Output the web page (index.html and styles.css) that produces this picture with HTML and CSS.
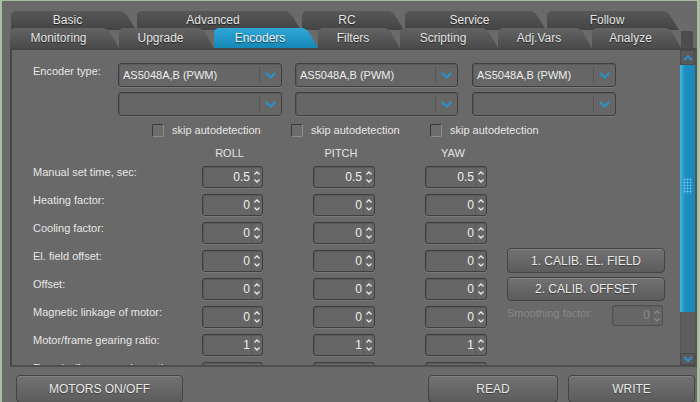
FILE: index.html
```html
<!DOCTYPE html>
<html>
<head>
<meta charset="utf-8">
<link rel="stylesheet" href="styles.css">
</head>
<body>
<div class="win">
  <div class="tabs">
    <div class="tabrow r1">
      <div class="tab w-basic">Basic</div>
      <div class="tab w-adv">Advanced</div>
      <div class="tab w-rc">RC</div>
      <div class="tab w-serv">Service</div>
      <div class="tab w-follow">Follow</div>
    </div>
    <div class="tabrow r2">
      <div class="tab w-mon">Monitoring</div>
      <div class="tab w-upg">Upgrade</div>
      <div class="tab w-enc active">Encoders</div>
      <div class="tab w-fil">Filters</div>
      <div class="tab w-scr">Scripting</div>
      <div class="tab w-adj">Adj.Vars</div>
      <div class="tab w-ana">Analyze</div>
      <div class="tabfill"></div>
    </div>
  </div>

  <div class="panel">
    <div class="content">
      <div class="enc">
        <div class="enc-label">Encoder type:</div>
        <div class="combos">
          <div class="combo c1"><span class="ctext">AS5048A,B (PWM)</span><span class="cbtn"><svg width="11" height="7" viewBox="0 0 11 7"><path d="M1 1 L5.5 5.5 L10 1" fill="none" stroke="#2a93c6" stroke-width="2.2"/></svg></span></div>
          <div class="combo c2"><span class="ctext">AS5048A,B (PWM)</span><span class="cbtn"><svg width="11" height="7" viewBox="0 0 11 7"><path d="M1 1 L5.5 5.5 L10 1" fill="none" stroke="#2a93c6" stroke-width="2.2"/></svg></span></div>
          <div class="combo c3"><span class="ctext">AS5048A,B (PWM)</span><span class="cbtn"><svg width="11" height="7" viewBox="0 0 11 7"><path d="M1 1 L5.5 5.5 L10 1" fill="none" stroke="#2a93c6" stroke-width="2.2"/></svg></span></div>
          <div class="combo c1"><span class="ctext"></span><span class="cbtn"><svg width="11" height="7" viewBox="0 0 11 7"><path d="M1 1 L5.5 5.5 L10 1" fill="none" stroke="#2a93c6" stroke-width="2.2"/></svg></span></div>
          <div class="combo c2"><span class="ctext"></span><span class="cbtn"><svg width="11" height="7" viewBox="0 0 11 7"><path d="M1 1 L5.5 5.5 L10 1" fill="none" stroke="#2a93c6" stroke-width="2.2"/></svg></span></div>
          <div class="combo c3"><span class="ctext"></span><span class="cbtn"><svg width="11" height="7" viewBox="0 0 11 7"><path d="M1 1 L5.5 5.5 L10 1" fill="none" stroke="#2a93c6" stroke-width="2.2"/></svg></span></div>
        </div>
      </div>

      <div class="checks">
        <label class="chk"><span class="box"></span>skip autodetection</label>
        <label class="chk"><span class="box"></span>skip autodetection</label>
        <label class="chk"><span class="box"></span>skip autodetection</label>
      </div>

      <div class="params">
        <div class="grid">
          <div></div><div class="hdr">ROLL</div><div class="hdr">PITCH</div><div class="hdr">YAW</div>

          <div class="lbl">Manual set time, sec:</div>
          <div class="spin"><span class="val">0.5</span><span class="arr"><svg width="6" height="4" viewBox="0 0 6 4"><path d="M0.5 3.5 L3 1 L5.5 3.5" fill="none" stroke="#e8e8e8" stroke-width="1.3"/></svg><svg width="6" height="4" viewBox="0 0 6 4"><path d="M0.5 0.5 L3 3 L5.5 0.5" fill="none" stroke="#e8e8e8" stroke-width="1.3"/></svg></span></div>
          <div class="spin"><span class="val">0.5</span><span class="arr"><svg width="6" height="4" viewBox="0 0 6 4"><path d="M0.5 3.5 L3 1 L5.5 3.5" fill="none" stroke="#e8e8e8" stroke-width="1.3"/></svg><svg width="6" height="4" viewBox="0 0 6 4"><path d="M0.5 0.5 L3 3 L5.5 0.5" fill="none" stroke="#e8e8e8" stroke-width="1.3"/></svg></span></div>
          <div class="spin"><span class="val">0.5</span><span class="arr"><svg width="6" height="4" viewBox="0 0 6 4"><path d="M0.5 3.5 L3 1 L5.5 3.5" fill="none" stroke="#e8e8e8" stroke-width="1.3"/></svg><svg width="6" height="4" viewBox="0 0 6 4"><path d="M0.5 0.5 L3 3 L5.5 0.5" fill="none" stroke="#e8e8e8" stroke-width="1.3"/></svg></span></div>

          <div class="lbl">Heating factor:</div>
          <div class="spin"><span class="val">0</span><span class="arr"><svg width="6" height="4" viewBox="0 0 6 4"><path d="M0.5 3.5 L3 1 L5.5 3.5" fill="none" stroke="#e8e8e8" stroke-width="1.3"/></svg><svg width="6" height="4" viewBox="0 0 6 4"><path d="M0.5 0.5 L3 3 L5.5 0.5" fill="none" stroke="#e8e8e8" stroke-width="1.3"/></svg></span></div>
          <div class="spin"><span class="val">0</span><span class="arr"><svg width="6" height="4" viewBox="0 0 6 4"><path d="M0.5 3.5 L3 1 L5.5 3.5" fill="none" stroke="#e8e8e8" stroke-width="1.3"/></svg><svg width="6" height="4" viewBox="0 0 6 4"><path d="M0.5 0.5 L3 3 L5.5 0.5" fill="none" stroke="#e8e8e8" stroke-width="1.3"/></svg></span></div>
          <div class="spin"><span class="val">0</span><span class="arr"><svg width="6" height="4" viewBox="0 0 6 4"><path d="M0.5 3.5 L3 1 L5.5 3.5" fill="none" stroke="#e8e8e8" stroke-width="1.3"/></svg><svg width="6" height="4" viewBox="0 0 6 4"><path d="M0.5 0.5 L3 3 L5.5 0.5" fill="none" stroke="#e8e8e8" stroke-width="1.3"/></svg></span></div>

          <div class="lbl">Cooling factor:</div>
          <div class="spin"><span class="val">0</span><span class="arr"><svg width="6" height="4" viewBox="0 0 6 4"><path d="M0.5 3.5 L3 1 L5.5 3.5" fill="none" stroke="#e8e8e8" stroke-width="1.3"/></svg><svg width="6" height="4" viewBox="0 0 6 4"><path d="M0.5 0.5 L3 3 L5.5 0.5" fill="none" stroke="#e8e8e8" stroke-width="1.3"/></svg></span></div>
          <div class="spin"><span class="val">0</span><span class="arr"><svg width="6" height="4" viewBox="0 0 6 4"><path d="M0.5 3.5 L3 1 L5.5 3.5" fill="none" stroke="#e8e8e8" stroke-width="1.3"/></svg><svg width="6" height="4" viewBox="0 0 6 4"><path d="M0.5 0.5 L3 3 L5.5 0.5" fill="none" stroke="#e8e8e8" stroke-width="1.3"/></svg></span></div>
          <div class="spin"><span class="val">0</span><span class="arr"><svg width="6" height="4" viewBox="0 0 6 4"><path d="M0.5 3.5 L3 1 L5.5 3.5" fill="none" stroke="#e8e8e8" stroke-width="1.3"/></svg><svg width="6" height="4" viewBox="0 0 6 4"><path d="M0.5 0.5 L3 3 L5.5 0.5" fill="none" stroke="#e8e8e8" stroke-width="1.3"/></svg></span></div>

          <div class="lbl">El. field offset:</div>
          <div class="spin"><span class="val">0</span><span class="arr"><svg width="6" height="4" viewBox="0 0 6 4"><path d="M0.5 3.5 L3 1 L5.5 3.5" fill="none" stroke="#e8e8e8" stroke-width="1.3"/></svg><svg width="6" height="4" viewBox="0 0 6 4"><path d="M0.5 0.5 L3 3 L5.5 0.5" fill="none" stroke="#e8e8e8" stroke-width="1.3"/></svg></span></div>
          <div class="spin"><span class="val">0</span><span class="arr"><svg width="6" height="4" viewBox="0 0 6 4"><path d="M0.5 3.5 L3 1 L5.5 3.5" fill="none" stroke="#e8e8e8" stroke-width="1.3"/></svg><svg width="6" height="4" viewBox="0 0 6 4"><path d="M0.5 0.5 L3 3 L5.5 0.5" fill="none" stroke="#e8e8e8" stroke-width="1.3"/></svg></span></div>
          <div class="spin"><span class="val">0</span><span class="arr"><svg width="6" height="4" viewBox="0 0 6 4"><path d="M0.5 3.5 L3 1 L5.5 3.5" fill="none" stroke="#e8e8e8" stroke-width="1.3"/></svg><svg width="6" height="4" viewBox="0 0 6 4"><path d="M0.5 0.5 L3 3 L5.5 0.5" fill="none" stroke="#e8e8e8" stroke-width="1.3"/></svg></span></div>

          <div class="lbl">Offset:</div>
          <div class="spin"><span class="val">0</span><span class="arr"><svg width="6" height="4" viewBox="0 0 6 4"><path d="M0.5 3.5 L3 1 L5.5 3.5" fill="none" stroke="#e8e8e8" stroke-width="1.3"/></svg><svg width="6" height="4" viewBox="0 0 6 4"><path d="M0.5 0.5 L3 3 L5.5 0.5" fill="none" stroke="#e8e8e8" stroke-width="1.3"/></svg></span></div>
          <div class="spin"><span class="val">0</span><span class="arr"><svg width="6" height="4" viewBox="0 0 6 4"><path d="M0.5 3.5 L3 1 L5.5 3.5" fill="none" stroke="#e8e8e8" stroke-width="1.3"/></svg><svg width="6" height="4" viewBox="0 0 6 4"><path d="M0.5 0.5 L3 3 L5.5 0.5" fill="none" stroke="#e8e8e8" stroke-width="1.3"/></svg></span></div>
          <div class="spin"><span class="val">0</span><span class="arr"><svg width="6" height="4" viewBox="0 0 6 4"><path d="M0.5 3.5 L3 1 L5.5 3.5" fill="none" stroke="#e8e8e8" stroke-width="1.3"/></svg><svg width="6" height="4" viewBox="0 0 6 4"><path d="M0.5 0.5 L3 3 L5.5 0.5" fill="none" stroke="#e8e8e8" stroke-width="1.3"/></svg></span></div>

          <div class="lbl">Magnetic linkage of motor:</div>
          <div class="spin"><span class="val">0</span><span class="arr"><svg width="6" height="4" viewBox="0 0 6 4"><path d="M0.5 3.5 L3 1 L5.5 3.5" fill="none" stroke="#e8e8e8" stroke-width="1.3"/></svg><svg width="6" height="4" viewBox="0 0 6 4"><path d="M0.5 0.5 L3 3 L5.5 0.5" fill="none" stroke="#e8e8e8" stroke-width="1.3"/></svg></span></div>
          <div class="spin"><span class="val">0</span><span class="arr"><svg width="6" height="4" viewBox="0 0 6 4"><path d="M0.5 3.5 L3 1 L5.5 3.5" fill="none" stroke="#e8e8e8" stroke-width="1.3"/></svg><svg width="6" height="4" viewBox="0 0 6 4"><path d="M0.5 0.5 L3 3 L5.5 0.5" fill="none" stroke="#e8e8e8" stroke-width="1.3"/></svg></span></div>
          <div class="spin"><span class="val">0</span><span class="arr"><svg width="6" height="4" viewBox="0 0 6 4"><path d="M0.5 3.5 L3 1 L5.5 3.5" fill="none" stroke="#e8e8e8" stroke-width="1.3"/></svg><svg width="6" height="4" viewBox="0 0 6 4"><path d="M0.5 0.5 L3 3 L5.5 0.5" fill="none" stroke="#e8e8e8" stroke-width="1.3"/></svg></span></div>

          <div class="lbl">Motor/frame gearing ratio:</div>
          <div class="spin"><span class="val">1</span><span class="arr"><svg width="6" height="4" viewBox="0 0 6 4"><path d="M0.5 3.5 L3 1 L5.5 3.5" fill="none" stroke="#e8e8e8" stroke-width="1.3"/></svg><svg width="6" height="4" viewBox="0 0 6 4"><path d="M0.5 0.5 L3 3 L5.5 0.5" fill="none" stroke="#e8e8e8" stroke-width="1.3"/></svg></span></div>
          <div class="spin"><span class="val">1</span><span class="arr"><svg width="6" height="4" viewBox="0 0 6 4"><path d="M0.5 3.5 L3 1 L5.5 3.5" fill="none" stroke="#e8e8e8" stroke-width="1.3"/></svg><svg width="6" height="4" viewBox="0 0 6 4"><path d="M0.5 0.5 L3 3 L5.5 0.5" fill="none" stroke="#e8e8e8" stroke-width="1.3"/></svg></span></div>
          <div class="spin"><span class="val">1</span><span class="arr"><svg width="6" height="4" viewBox="0 0 6 4"><path d="M0.5 3.5 L3 1 L5.5 3.5" fill="none" stroke="#e8e8e8" stroke-width="1.3"/></svg><svg width="6" height="4" viewBox="0 0 6 4"><path d="M0.5 0.5 L3 3 L5.5 0.5" fill="none" stroke="#e8e8e8" stroke-width="1.3"/></svg></span></div>

          <div class="lbl">Encoder/frame gearing ratio:</div>
          <div class="spin"><span class="val"></span><span class="arr"></span></div>
          <div class="spin"><span class="val"></span><span class="arr"></span></div>
          <div class="spin"><span class="val"></span><span class="arr"></span></div>
        </div>

        <div class="side">
          <div class="btn calib">1. CALIB. EL. FIELD</div>
          <div class="btn calib">2. CALIB. OFFSET</div>
          <div class="smooth">
            <span class="slbl">Smoothing factor:</span>
            <div class="spin dis"><span class="val">0</span><span class="arr"><svg width="6" height="4" viewBox="0 0 6 4"><path d="M0.5 3.5 L3 1 L5.5 3.5" fill="none" stroke="#8a8a8a" stroke-width="1.2"/></svg><svg width="6" height="4" viewBox="0 0 6 4"><path d="M0.5 0.5 L3 3 L5.5 0.5" fill="none" stroke="#8a8a8a" stroke-width="1.2"/></svg></span></div>
          </div>
        </div>
      </div>
    </div>

    <div class="scrollbar">
      <div class="sbtn"><svg width="10" height="6" viewBox="0 0 10 6"><path d="M1 5 L5 1.2 L9 5" fill="none" stroke="#2a93c6" stroke-width="2"/></svg></div>
      <div class="thumb"><div class="grip"></div></div>
      <div class="track"></div>
      <div class="sbtn down"><svg width="10" height="6" viewBox="0 0 10 6"><path d="M1 1 L5 4.8 L9 1" fill="none" stroke="#2a93c6" stroke-width="2"/></svg></div>
    </div>
  </div>

  <div class="bottom">
    <div class="btn bb motors">MOTORS ON/OFF</div>
    <div class="btn bb read">READ</div>
    <div class="btn bb write">WRITE</div>
  </div>
</div>
</body>
</html>
```

FILE: styles.css
```css
* { box-sizing: border-box; }
html, body { margin: 0; padding: 0; }
body {
  width: 700px;
  height: 402px;
  overflow: hidden;
  background: #6a6a6a;
  font-family: "Liberation Sans", Arial, sans-serif;
  color: #e6e6e6;
}
.win {
  width: 700px;
  height: 402px;
  border-top: 1px solid #a8c0a0;
  border-left: 2px solid #a8c0a0;
  border-right: 3px solid #a8c0a0;
  background: #6a6a6a;
  overflow: hidden;
}

/* tabs */
.tabs { padding-top: 10px; }
.tabrow { display: flex; }
.r1 { margin-left: 9px; gap: 1px; height: 19px; }
.r2 { margin-left: 8px; height: 20px; margin-top: -2px; position: relative; }
.tab {
  font-size: 12px;
  line-height: 19px;
  text-align: center;
  padding-right: 12px;
  color: #e4e4e4;
  text-shadow: 0 1px 1px rgba(0,0,0,0.55);
  clip-path: polygon(0 3px, 2px 1px, 4px 0, calc(100% - 15px) 0, calc(100% - 11px) 2px, calc(100% - 8px) 6px, 100% 100%, 0 100%);
}
.r1 .tab { background: linear-gradient(#575757, #444444); }
.r2 .tab { background: linear-gradient(#636363, #4b4b4b); line-height: 20px; }
.r2 .tab.active { background: linear-gradient(#2ea6d6, #1788b8); color: #f2f2f2; }
.tabfill { width: 12px; margin-top: 3px; background: #4d4d4d; border-radius: 0 3px 0 0; }
.w-basic { width: 125px; }
.w-adv { width: 164px; }
.w-rc { width: 102px; }
.w-serv { width: 141px; }
.w-follow { width: 132px; }
.w-mon { width: 109px; }
.w-upg { width: 95px; }
.w-enc { width: 104px; }
.w-fil { width: 82px; }
.w-scr { width: 98px; }
.w-adj { width: 94px; }
.w-ana { width: 89px; }

/* panel */
.panel {
  margin-left: 8px;
  width: 687px;
  height: 319px;
  display: flex;
  border: 2px solid #474747;
  border-right-color: #555;
  border-bottom-color: #4e4e4e;
  background: #696969;
}
.content {
  flex: 1;
  overflow: hidden;
  padding-left: 21px;
  padding-top: 13px;
  font-size: 11px;
}

.enc { display: flex; }
.enc-label { width: 85px; padding-top: 2px; }
.combos {
  display: grid;
  grid-template-columns: 164px 163px 145px;
  column-gap: 13px;
  row-gap: 5px;
}
.combos .c3 { margin-left: 1px; }
.combo {
  height: 24px;
  display: flex;
  align-items: center;
  border: 1px solid #3f3f3f;
  border-radius: 3px;
  background: #666;
  box-shadow: inset 1px 1px 0 #5a5a5a, 0 1px 0 #7a7a7a;
}
.ctext { flex: 1; padding-left: 4px; color: #ececec; }
.cbtn {
  width: 22px;
  height: 16px;
  border-left: 1px solid #555;
  display: flex;
  align-items: center;
  justify-content: center;
}

.checks { display: flex; margin-left: 119px; margin-top: 7px; height: 14px; }
.chk { width: 139px; display: flex; align-items: center; gap: 8px; color: #e6e6e6; }
.box {
  width: 12px; height: 13px;
  border: 1px solid;
  border-color: #3a3a3a #8e8e8e #8e8e8e #3a3a3a;
  border-radius: 2px;
  background: #6c6c6c;
}

.params { display: flex; margin-top: 10px; }
.grid {
  display: grid;
  grid-template-columns: 119px 61px 62px 62px;
  grid-template-rows: 13px;
  grid-auto-rows: 22px;
  column-gap: 50px;
  row-gap: 6px;
}
.hdr { text-align: center; line-height: 13px; color: #e2e2e2; padding-right: 6px; }
.lbl { line-height: 13px; white-space: nowrap; }
.spin {
  display: flex;
  border: 1px solid #3f3f3f;
  border-radius: 3px;
  background: #666;
  box-shadow: inset 1px 1px 0 #595959, 0 1px 0 #7a7a7a;
  font-size: 12px;
}
.val { flex: 1; text-align: right; line-height: 20px; padding-right: 1px; color: #ededed; }
.arr {
  width: 11px;
  display: flex;
  flex-direction: column;
  align-items: center;
  justify-content: center;
  gap: 4px;
  border-left: 1px solid #5a5a5a;
}

.side { margin-left: 20px; margin-top: 101px; width: 158px; }
.btn {
  display: flex;
  align-items: center;
  justify-content: center;
  font-size: 12px;
  color: #e8e8e8;
  border: 1px solid #444;
  border-radius: 4px;
  background: linear-gradient(#727272, #5c5c5c);
  box-shadow: inset 0 1px 0 rgba(255,255,255,0.12);
  text-shadow: 0 1px 1px rgba(0,0,0,0.4);
}
.calib { height: 25px; margin-bottom: 4px; }
.calib + .calib { height: 24px; }
.smooth { display: flex; justify-content: space-between; align-items: flex-start; margin-top: 1px; width: 156px; }
.slbl { color: #878787; padding-top: 2px; }
.spin.dis {
  width: 51px;
  height: 21px;
  border-color: #505050;
  box-shadow: inset 1px 1px 0 #5e5e5e;
}
.spin.dis .val { color: #8a8a8a; line-height: 19px; }

/* scrollbar */
.scrollbar { width: 15px; margin-right: 0; display: flex; flex-direction: column; }
.sbtn {
  height: 15px;
  background: #5a5a5a;
  border: 1px solid #4a4a4a;
  display: flex;
  align-items: center;
  justify-content: center;
}
.sbtn.down { height: 12px; }
.thumb {
  height: 247px;
  background: linear-gradient(90deg, #4fb3df, #1e90c4 30%, #1a86b8);
  display: flex;
  justify-content: center;
  padding-top: 113px;
}
.grip {
  width: 9px; height: 16px;
  background-image: radial-gradient(circle, #6cc2e8 0.8px, transparent 1.2px);
  background-size: 3px 3px;
}
.track { flex: 1; background: #5e5e5e; border-left: 1px solid #555; }

/* bottom */
.bottom { display: flex; margin-top: 8px; height: 28px; }
.bb { height: 28px; }
.motors { margin-left: 14px; width: 167px; }
.read { margin-left: 245px; width: 130px; }
.write { margin-left: 10px; width: 127px; }
```
